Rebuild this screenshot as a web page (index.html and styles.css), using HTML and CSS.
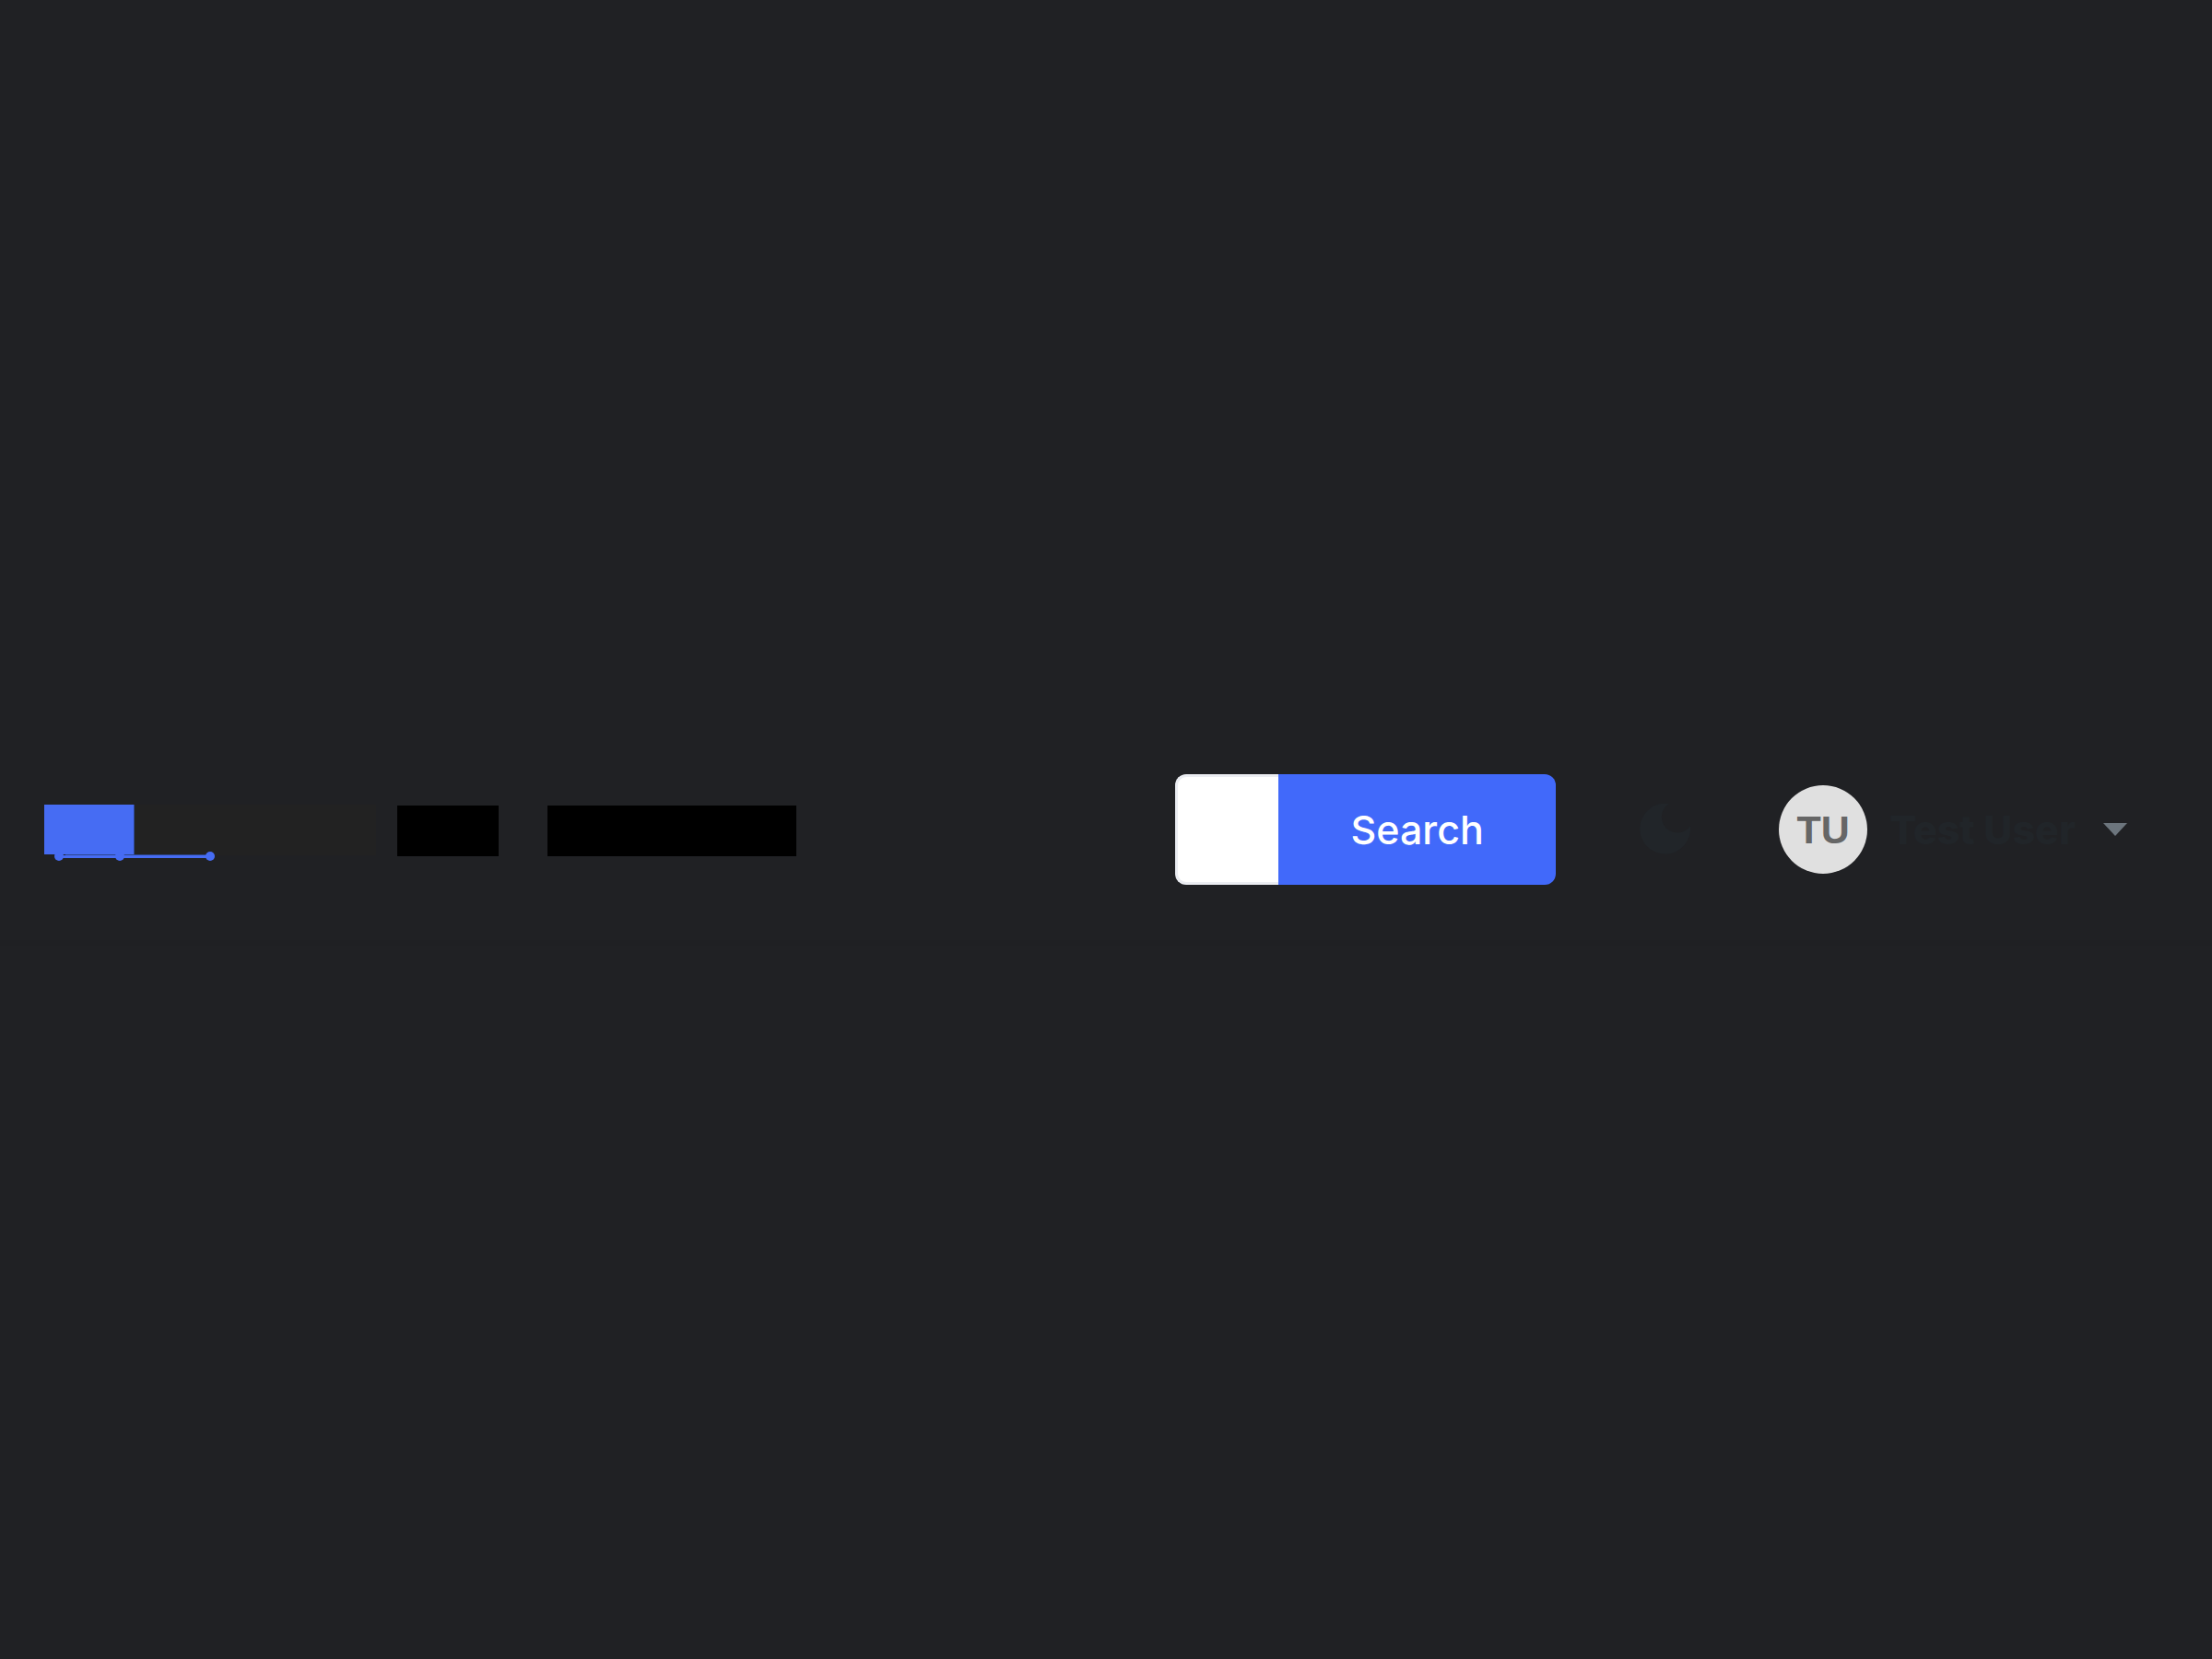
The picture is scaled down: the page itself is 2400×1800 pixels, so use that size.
FILE: index.html
```html
<!DOCTYPE html>
<html lang="en">
<head>
<meta charset="utf-8">
<meta name="viewport" content="width=device-width, initial-scale=1">
<title>Header</title>
<link rel="stylesheet" href="styles.css">
</head>
<body>
<header class="navbar">
  <a class="brand" href="#" aria-label="Home">
    <svg width="360" height="68" viewBox="0 0 360 68" aria-hidden="true">
      <path fill="#222" d="M97 7h263v55H97z"/>
      <path fill="#466cf3" d="M0 7h97v54H0z"/>
      <path fill="#2d458c" d="M97 7h1v54h-1zM23 61h157v1H23z"/>
      <path fill="#466cf3" d="M16 62h164v3H16z"/>
      <g fill="#466cf3"><circle cx="16" cy="63" r="5"/><circle cx="82" cy="63" r="5"/><circle cx="180" cy="63" r="5"/></g>
    </svg>
  </a>
  <a class="mark mark-small" href="#" aria-label="Overview"></a>
  <a class="mark mark-wide" href="#" aria-label="Documentation"></a>
  <form class="search">
    <input class="search-input" type="text" aria-label="Search text">
    <button class="search-button" type="submit">Search</button>
  </form>
  <button class="theme" type="button" aria-label="Dark mode">
    <svg width="56" height="56" viewBox="0 0 56 56" aria-hidden="true"><path fill="#212529" d="M32 0A17 17 0 1 0 55 24A27.500 27.500 0 1 1 32 0Z"/></svg>
  </button>
  <button class="user" type="button">
    <span class="avatar">TU</span>
    <span class="name">Test User</span>
    <svg class="caret" width="26" height="14" viewBox="0 0 26 14" aria-hidden="true"><path fill="#6c757d" d="M0 0h26L13 14z"/></svg>
  </button>
</header>
</body>
</html>
```
FILE: styles.css
```css
* {
  box-sizing: border-box;
}

body {
  display: flex;
  flex-direction: column;
  justify-content: center;
  min-height: 100vh;
  margin: 0;
  background: #202124;
  font-family: Inter, "Liberation Sans", sans-serif;
  font-size: 43px;
}

button {
  padding: 0;
  border: 0;
  background: none;
  font: inherit;
}

.navbar {
  display: flex;
  align-items: center;
  height: 240px;
  padding: 0 92px 0 48px;
  background: #202124;
  box-shadow: 0 6px 0 #1f2023;
}

.brand,
.brand svg,
.theme svg {
  display: block;
}

.mark {
  height: 55px;
  margin-top: 3px;
  background: #000;
}

.mark-small {
  width: 110px;
  margin-left: 23px;
}

.mark-wide {
  width: 270px;
  margin-left: 53px;
}

.search {
  display: flex;
  height: 120px;
  margin-left: auto;
}

.search-input {
  width: 112px;
  padding: 0 24px;
  border: 3px solid #ebedf2;
  border-right: 0;
  border-radius: 12px 0 0 12px;
  background: #fff;
  font: inherit;
}

.search-button {
  width: 301px;
  border-radius: 0 12px 12px 0;
  background: #4169fa;
  color: #fff;
  font-weight: 500;
}

.theme {
  margin-left: 91px;
}

.user {
  display: flex;
  align-items: center;
  margin-left: 95px;
  color: #212529;
  font-weight: 800;
}

.avatar {
  display: grid;
  place-items: center;
  width: 96px;
  height: 96px;
  border-radius: 50%;
  background: #e0e0e0;
  color: #666;
  font-family: "Liberation Sans", Arial, sans-serif;
  font-weight: 700;
}

.name {
  margin-left: 24px;
}

.caret {
  margin-left: 30px;
}
```
